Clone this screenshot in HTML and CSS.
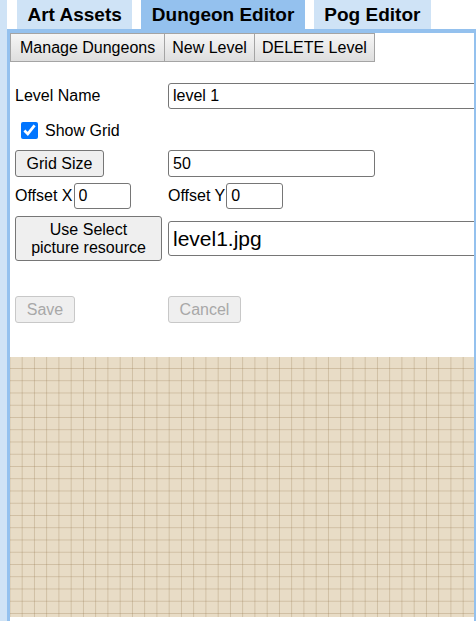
FILE: index.html
```html
<!DOCTYPE html>
<html>
<head>
<meta charset="utf-8">
<link rel="stylesheet" href="styles.css">
</head>
<body>
<div class="page">
  <div class="tabs">
    <div class="tab">Art Assets</div>
    <div class="tab active">Dungeon Editor</div>
    <div class="tab">Pog Editor</div>
  </div>
  <div class="panel">
    <div class="toolbar">
      <button class="tb-btn tb-first">Manage Dungeons</button><button class="tb-btn">New Level</button><button class="tb-btn">DELETE Level</button>
    </div>
    <div class="form">
      <div class="row row-name">
        <label class="col1">Level Name</label>
        <input class="field field-wide" type="text" value="level 1">
      </div>
      <div class="row row-check">
        <label class="check"><input type="checkbox" checked class="cb"><span>Show Grid</span></label>
      </div>
      <div class="row row-grid">
        <div class="col1"><button class="btn btn-grid">Grid Size</button></div>
        <input class="field field-size" type="text" value="50">
      </div>
      <div class="row row-offset">
        <div class="col1 off"><span>Offset X</span><input class="field field-off" type="text" value="0"></div>
        <div class="off"><span>Offset Y</span><input class="field field-off" type="text" value="0"></div>
      </div>
      <div class="row row-pic">
        <div class="col1"><button class="btn btn-pic">Use Select<br>picture resource</button></div>
        <input class="field field-pic" type="text" value="level1.jpg">
      </div>
      <div class="row row-save">
        <div class="col1"><button class="btn btn-dis btn-save" disabled>Save</button></div>
        <button class="btn btn-dis btn-cancel" disabled>Cancel</button>
      </div>
    </div>
    <div class="grid-area"></div>
  </div>
</div>
</body>
</html>
```

FILE: styles.css
```css
html, body {
  margin: 0;
  padding: 0;
  background: #ffffff;
  font-family: "Liberation Sans", Arial, sans-serif;
  font-size: 16px;
  color: #000;
  overflow: hidden;
}

.page {
  border-left: 7px solid #cfe3f6;
  box-sizing: border-box;
  height: 621px;
  display: flex;
  flex-direction: column;
}

.tabs {
  display: flex;
  padding-left: 10px;
  height: 29px;
}

.tab {
  background: #cfe3f6;
  font-weight: bold;
  font-size: 19px;
  line-height: 29px;
  padding: 0 10.5px;
  margin-right: 9px;
  color: #000;
}

.tab.active {
  background: #94c1ee;
}

.panel {
  flex: 1;
  border: 3px solid #94c1ee;
  border-top-width: 4px;
  border-right-width: 2px;
  border-bottom: none;
  overflow: hidden;
  display: flex;
  flex-direction: column;
}

.toolbar {
  display: flex;
  height: 29px;
}

.tb-btn {
  font-family: inherit;
  font-size: 16px;
  color: #000;
  height: 29px;
  padding: 0 7px;
  margin: 0;
  border: 1px solid #a4a4a4;
  border-radius: 0;
  background: linear-gradient(#f6f6f6, #dedede);
}

.tb-first {
  padding: 0 9px;
}

.tb-btn + .tb-btn {
  border-left: none;
}

.form {
  padding-left: 5px;
}

.row {
  display: flex;
  align-items: center;
}

.col1 {
  width: 153px;
  flex: none;
}

.row-name {
  margin-top: 21px;
  height: 26px;
}

.row-check {
  margin-top: 12px;
  height: 19px;
}

.row-grid {
  margin-top: 10px;
  height: 27px;
}

.row-offset {
  margin-top: 6px;
  height: 26px;
}

.row-pic {
  margin-top: 7px;
  height: 45px;
}

.row-save {
  margin-top: 35px;
  height: 27px;
}

.field {
  font-family: inherit;
  font-size: 16px;
  color: #000;
  box-sizing: border-box;
  border: 1px solid #767676;
  border-radius: 3px;
  padding: 0 4px;
  margin: 0;
  background: #fff;
}

.field-wide {
  height: 26px;
  width: 320px;
  flex: none;
}

.field-size {
  height: 27px;
  width: 207px;
}

.field-off {
  height: 26px;
  width: 57px;
  margin-left: 1px;
}

.field-pic {
  height: 35px;
  width: 320px;
  flex: none;
  font-size: 21px;
}

.off {
  display: flex;
  align-items: center;
}

.check {
  display: flex;
  align-items: flex-end;
  margin-left: 6px;
}

.cb {
  width: 17px;
  height: 17px;
  margin: 0 7px 1px 0;
}

.btn {
  font-family: inherit;
  font-size: 16px;
  color: #000;
  background: #efefef;
  border: 1px solid #767676;
  border-radius: 3px;
  margin: 0;
  padding: 0;
  box-sizing: border-box;
}

.btn-grid {
  width: 89px;
  height: 27px;
}

.btn-pic {
  width: 147px;
  height: 45px;
  line-height: 18px;
}

.btn-dis {
  color: #a8a8a8;
  border-color: #c8c8c8;
  background: #efefef;
}

.btn-save {
  width: 60px;
  height: 27px;
}

.btn-cancel {
  width: 73px;
  height: 27px;
}

.grid-area {
  margin-top: 34px;
  height: 260px;
  flex: none;
  background-color: #e8dcc6;
  background-image:
    linear-gradient(to right, rgba(150, 120, 80, 0.3) 1px, transparent 1px),
    linear-gradient(to bottom, rgba(150, 120, 80, 0.3) 1px, transparent 1px);
  background-size: 12.25px 12.25px;
  background-position: 11.7px 11px;
}
```
